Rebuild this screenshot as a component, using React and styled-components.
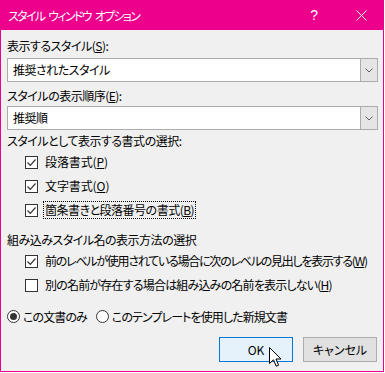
import styled, { createGlobalStyle } from "styled-components";

const GlobalStyle = createGlobalStyle`
  html, body {
    margin: 0;
    padding: 0;
    background: #ffffff;
  }
  body {
    font-family: "Noto Sans CJK JP", "Noto Sans", sans-serif;
    font-size: 12px;
    color: #000000;
    font-feature-settings: "palt";
    letter-spacing: -0.5px;
  }
`

const Window = styled.div`
  width: 384px;
  height: 372px;
  box-sizing: border-box;
  border: 1px solid #ec008c;
  border-top: none;
  background: #f0f0f0;
  display: flex;
  flex-direction: column;
  position: relative;
`
const TitleBar = styled.div`
  height: 30px;
  background: #ec008c;
  color: #ffffff;
  display: flex;
  align-items: center;
  padding-left: 8px;
  margin: 0 -1px;

  .title {
    flex: 1;
    letter-spacing: -1.7px;
    word-spacing: 3px;
  }
  .help {
    width: 46px;
    text-align: center;
    font-family: "Liberation Sans", sans-serif;
    font-size: 14px;
    margin-right: 1px;
  }
  .close {
    width: 46px;
    height: 30px;
    display: flex;
    align-items: center;
    justify-content: center;
  }
`
const Body = styled.div`
  padding: 0 5px 0 6px;
  display: flex;
  flex-direction: column;
`
const Label = styled.div`
  height: 18px;
  line-height: 18px;
  padding-top: ${({ top }) => top}px;
  margin-bottom: ${({ bottom }) => bottom || 0}px;
  white-space: nowrap;
`
const Select = styled.div`
  height: 24px;
  box-sizing: border-box;
  border: 1px solid #acacac;
  background: #ffffff;
  display: flex;
  align-items: stretch;

  .value {
    flex: 1;
    padding-left: 5px;
    line-height: 22px;
  }
  .arrow {
    width: 16px;
    background: #e5e5e5;
    border-left: 1px solid #acacac;
    display: flex;
    align-items: center;
    justify-content: center;
  }
`
const CheckRow = styled.label`
  height: 24px;
  display: flex;
  align-items: center;
  margin-left: 18px;
  white-space: nowrap;
`
const CheckText = styled.span`
  margin-left: 5px;
  line-height: 16px;
  padding: 0 1px;
  letter-spacing: ${({ spacing }) => spacing}px;
  border: 1px dotted ${({ focused }) => (focused ? "#000" : "transparent")};
`
const Box = styled.span`
  width: 13px;
  height: 13px;
  flex-shrink: 0;
  box-sizing: border-box;
  border: 1px solid #333333;
  background: #ffffff;
  display: flex;
  align-items: center;
  justify-content: center;
`
const RadioRow = styled.div`
  height: 24px;
  margin-top: 7px;
  display: flex;
  align-items: center;
  gap: 9px;
  letter-spacing: -0.9px;
`
const Radio = styled.label`
  display: flex;
  align-items: center;
  gap: 3px;
  white-space: nowrap;

  .dot {
    width: 13px;
    height: 13px;
    box-sizing: border-box;
    border: 1px solid #333333;
    border-radius: 50%;
    background: #ffffff;
    display: flex;
    align-items: center;
    justify-content: center;
  }
  .dot::after {
    content: "";
    width: 7px;
    height: 7px;
    border-radius: 50%;
    background: ${({ checked }) => (checked ? "#333333" : "transparent")};
  }
`
const Buttons = styled.div`
  margin-top: 9px;
  display: flex;
  justify-content: flex-end;
  gap: 10px;
  padding-right: 1px;
`
const Button = styled.div`
  width: 74px;
  height: 25px;
  box-sizing: border-box;
  border: 1px solid ${({ primary }) => (primary ? "#0078d7" : "#adadad")};
  background: ${({ primary }) => (primary ? "#e5f1fb" : "#e1e1e1")};
  display: flex;
  align-items: center;
  justify-content: center;
  letter-spacing: 0;
`
const Cursor = styled.svg`
  position: absolute;
  left: 268px;
  top: 347px;
`

function Check({ checked }) {
  return (
    <Box>
      {checked && (
        <svg width="11" height="11" viewBox="0 0 11 11">
          <path d="M1.5 5.5 L4.3 8.3 L9.5 2.5" fill="none" stroke="#333" strokeWidth="1.2" />
        </svg>
      )}
    </Box>
  )
}

function Dropdown({ value }) {
  return (
    <Select>
      <span className="value">{value}</span>
      <span className="arrow">
        <svg width="8" height="5" viewBox="0 0 8 5">
          <path d="M0.5 0.5 L4 4 L7.5 0.5" fill="none" stroke="#606060" strokeWidth="1" />
        </svg>
      </span>
    </Select>
  )
}

export default function App() {
  return (
    <>
      <GlobalStyle />
      <Window>
        <TitleBar>
          <span className="title">スタイル ウィンドウ オプション</span>
          <span className="help">?</span>
          <span className="close">
            <svg width="11" height="11" viewBox="0 0 11 11">
              <path d="M0.5 0.5 L10.5 10.5 M10.5 0.5 L0.5 10.5" stroke="#fff" strokeWidth="1" />
            </svg>
          </span>
        </TitleBar>
        <Body>
          <Label top={7} bottom={3}>表示するスタイル(<u>S</u>):</Label>
          <Dropdown value="推奨されたスタイル" />
          <Label top={5} bottom={1}>スタイルの表示順序(<u>E</u>):</Label>
          <Dropdown value="推奨順" />
          <Label top={2}>スタイルとして表示する書式の選択:</Label>
          <CheckRow>
            <Check checked />
            <CheckText spacing={-0.1}>段落書式(<u>P</u>)</CheckText>
          </CheckRow>
          <CheckRow>
            <Check checked />
            <CheckText spacing={-0.1}>文字書式(<u>O</u>)</CheckText>
          </CheckRow>
          <CheckRow>
            <Check checked />
            <CheckText spacing={-0.5} focused>箇条書きと段落番号の書式(<u>B</u>)</CheckText>
          </CheckRow>
          <Label top={9}>組み込みスタイル名の表示方法の選択</Label>
          <CheckRow>
            <Check checked />
            <CheckText spacing={-1.25}>前のレベルが使用されている場合に次のレベルの見出しを表示する(<u>W</u>)</CheckText>
          </CheckRow>
          <CheckRow>
            <Check />
            <CheckText spacing={-0.8}>別の名前が存在する場合は組み込みの名前を表示しない(<u>H</u>)</CheckText>
          </CheckRow>
          <RadioRow>
            <Radio checked>
              <span className="dot" />
              この文書のみ
            </Radio>
            <Radio>
              <span className="dot" />
              このテンプレートを使用した新規文書
            </Radio>
          </RadioRow>
          <Buttons>
            <Button primary>OK</Button>
            <Button>キャンセル</Button>
          </Buttons>
        </Body>
        <Cursor width="13" height="21" viewBox="0 0 13 21">
          <path
            d="M0.5 0.5 L0.5 16.5 L4.5 12.8 L7.2 19.2 L9.6 18.2 L7 12 L12 12 Z"
            fill="#fff"
            stroke="#000"
            strokeWidth="1"
            strokeLinejoin="round"
          />
        </Cursor>
      </Window>
    </>
  )
}
